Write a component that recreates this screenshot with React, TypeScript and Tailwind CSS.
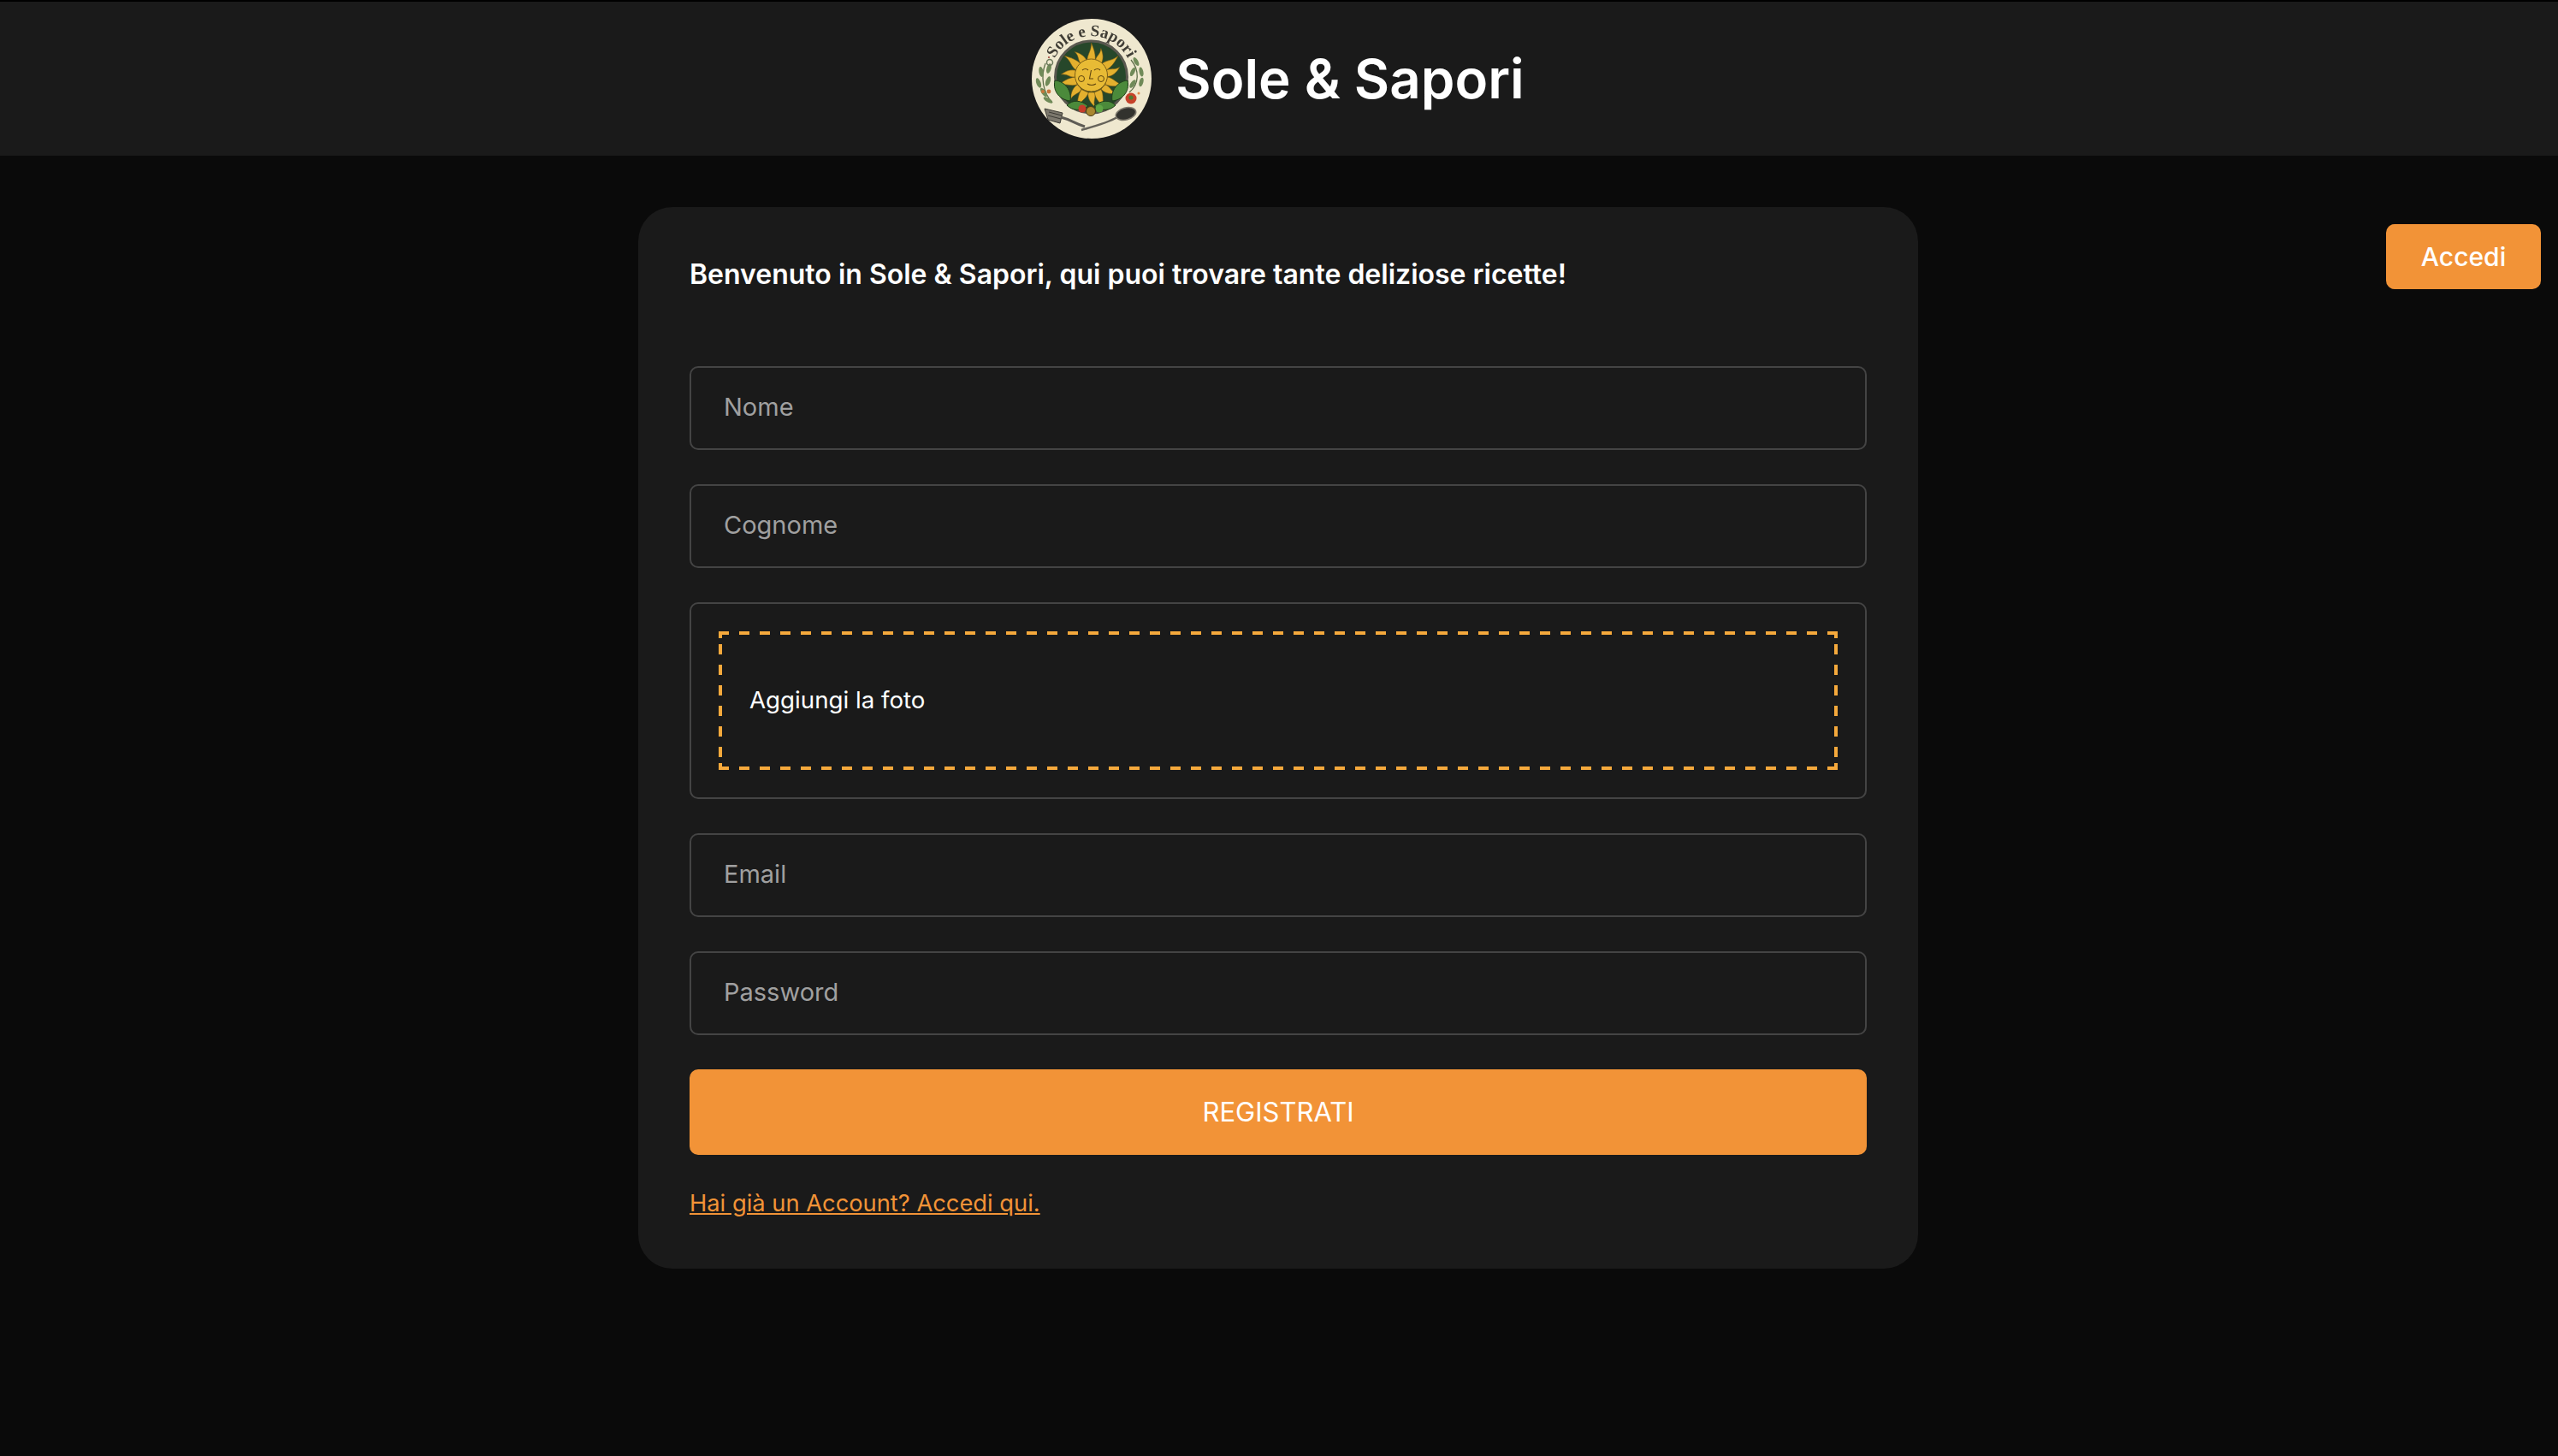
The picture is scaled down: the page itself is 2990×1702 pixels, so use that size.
import React from 'react'

const FONT = 'font-["Inter","Liberation_Sans",sans-serif]'

const rays = [0, 26, 52, 78, 104, 130, 156, 180, 204, 230, 256, 282, 308, 334]

const Logo = () => (
  <svg viewBox="0 0 140 140" className="h-[140px] w-[140px] shrink-0">
    <defs>
      <path id="arc" d="M 21.5 68 A 48 48 0 0 1 117.5 68" />
      <filter id="soft">
        <feGaussianBlur stdDeviation="0.4" />
      </filter>
    </defs>
    <g filter="url(#soft)">
      <circle cx="70" cy="70" r="70" fill="#efe8cf" />
      <circle cx="69.5" cy="68" r="42" fill="#27472a" stroke="#5a5850" strokeWidth="3" />
      {/* sun rays */}
      {rays.map((a, i) => (
        <path
          key={a}
          d={
            i % 2 === 0
              ? 'M 65 50 C 64 42 70 38 69.5 28 C 73 36 75 42 74 50 Z'
              : 'M 66 50 C 63 44 68 40 65 33 C 71 38 74 44 73 50 Z'
          }
          fill="#e3b02f"
          stroke="#6e5212"
          strokeWidth="0.5"
          transform={`rotate(${a} 69.5 68)`}
        />
      ))}
      {/* leaves inside the ring */}
      <path d="M 27 72 C 39 73 47 84 45 96 C 34 95 24 86 27 72 Z" fill="#4c8a3a" stroke="#1f3d1a" />
      <path d="M 112 72 C 100 73 92 84 94 96 C 105 95 115 86 112 72 Z" fill="#4c8a3a" stroke="#1f3d1a" />
      <path d="M 41 101 C 48 94 58 95 66 102 C 58 108 48 108 41 101 Z" fill="#4c8a3a" stroke="#1f3d1a" />
      <path d="M 73 102 C 81 95 91 94 98 101 C 91 108 81 108 73 102 Z" fill="#4c8a3a" stroke="#1f3d1a" />
      <circle cx="59" cy="105" r="4.5" fill="#c43d2a" />
      <circle cx="79" cy="105" r="4.5" fill="#5fa544" />
      <circle cx="69" cy="108" r="5.5" fill="#a9862f" stroke="#4a3d17" />
      {/* sun face */}
      <circle cx="69.5" cy="66" r="19" fill="#e8bb36" stroke="#7d5f16" strokeWidth="1" />
      <path d="M 59 60 q 4 -3 7 0 M 73 60 q 4 -3 7 0" fill="none" stroke="#5f4510" strokeWidth="1.2" />
      <path d="M 69.5 60 L 67.5 70 L 72 70 M 65 76 q 5 3 10 0" fill="none" stroke="#5f4510" strokeWidth="1.1" />
      <circle cx="58" cy="70" r="3.5" fill="none" stroke="#5f4510" strokeWidth="1" />
      <circle cx="81" cy="70" r="3.5" fill="none" stroke="#5f4510" strokeWidth="1" />
      {/* laurel left */}
      <path d="M 16 52 C 10 68 13 86 24 98" fill="none" stroke="#5e6d4a" strokeWidth="1.3" />
      {[[11, 62, -10], [8, 75, -20], [14, 86, -35], [20, 58, 15], [19, 73, 20]].map(([x, y, r]) => (
        <ellipse key={`l${x}${y}`} cx={x} cy={y} rx="2.6" ry="6" fill="#6f8a58" transform={`rotate(${r} ${x} ${y})`} />
      ))}
      <ellipse cx="19" cy="95" rx="6" ry="2.4" fill="#6f8a58" transform="rotate(30 19 95)" />
      <circle cx="21" cy="51" r="3.5" fill="none" stroke="#6d7a5c" strokeWidth="1.5" />
      {/* laurel right */}
      <path d="M 116 48 C 126 60 126 76 114 86" fill="none" stroke="#5e6d4a" strokeWidth="1.3" />
      {[[122, 50, -30], [128, 62, -12], [128, 74, 15], [118, 62, 25], [118, 76, 35]].map(([x, y, r]) => (
        <ellipse key={`r${x}${y}`} cx={x} cy={y} rx="2.4" ry="5.5" fill="#6f8a58" transform={`rotate(${r} ${x} ${y})`} />
      ))}
      <circle cx="116" cy="93" r="6.5" fill="#c6432a" />
      <circle cx="116" cy="92" r="2.6" fill="#4d7a32" />
      <circle cx="125" cy="87" r="1.5" fill="#e08a4a" />
      <circle cx="20" cy="85" r="2.4" fill="#c8743a" />
      <circle cx="13" cy="85" r="2" fill="#c8743a" />
      <circle cx="20" cy="45" r="1.1" fill="#a0453a" />
      {/* fork and spoon */}
      <path d="M 15 105 L 36 110 L 33 122 L 19 118 Z" fill="#7c786d" stroke="#3c3a34" />
      <path d="M 20 109 L 35 113 M 19 113 L 34 117" stroke="#3c3a34" strokeWidth="1" />
      <path d="M 34 115 C 46 118 50 122 62 126" fill="none" stroke="#5f5c54" strokeWidth="3" />
      <path d="M 58 130 C 72 126 88 122 100 115" fill="none" stroke="#66635a" strokeWidth="2.6" />
      <ellipse cx="110" cy="111" rx="12" ry="7" fill="#33322d" stroke="#7c786d" strokeWidth="1.5" transform="rotate(-15 110 111)" />
      <text className="font-['Liberation_Serif',serif]" fontSize="19" fontWeight="700" fill="#3f3d36">
        <textPath href="#arc" startOffset="50%" textAnchor="middle">
          Sole e Sapori
        </textPath>
      </text>
    </g>
  </svg>
)

const Field = ({ placeholder, type = 'text' }: { placeholder: string; type?: string }) => (
  <input
    type={type}
    placeholder={placeholder}
    className="h-[98px] w-full rounded-[10px] border-2 border-[#444444] bg-[#1a1a1a] px-[38px] pb-[3px] text-[29px] text-white outline-none placeholder:text-[#a0a0a0]"
  />
)

const App = () => {
  return (
    <div className={`relative min-h-[1702px] bg-[#0a0a0a] ${FONT}`}>
      <header className="flex h-[182px] items-center justify-center gap-[28px] border-t-2 border-[#000000] bg-[#1a1a1a] pr-[2px]">
        <Logo />
        <h1 className="pb-[1px] text-[63.6px] font-semibold text-white">Sole &amp; Sapori</h1>
      </header>

      <button className="absolute right-[20px] top-[262px] h-[76px] w-[181px] rounded-[10px] bg-[#f29337] text-[30px] font-medium text-white">
        Accedi
      </button>

      <main className="flex justify-center pr-[2px] pt-[60px]">
        <div className="flex w-[1496px] flex-col rounded-[40px] bg-[#1a1a1a] p-[60px]">
          <h2 className="mb-[88px] text-[32px] font-semibold leading-[38px] text-white">
            Benvenuto in Sole &amp; Sapori, qui puoi trovare tante deliziose ricette!
          </h2>

          <form className="flex flex-col gap-[40px]">
            <Field placeholder="Nome" />
            <Field placeholder="Cognome" />

            <div className="h-[230px] rounded-[10px] border-2 border-[#444444] p-[32px]">
              <div className="relative flex h-full items-center pl-[36px]">
                {/* dashes drawn so the corners line up with the reference */}
                <svg className="absolute inset-0 h-[162px] w-[1308px]" fill="none" stroke="#f5a93c" strokeWidth="4">
                  <line x1="0" y1="2" x2="1308" y2="2" strokeDasharray="12 12" />
                  <line x1="0" y1="160" x2="1308" y2="160" strokeDasharray="12 12" />
                  <line x1="2" y1="0" x2="2" y2="162" strokeDasharray="8 7 12 12 12 12 12 12 12 12 12 12 12 7 8" />
                  <line x1="1306" y1="0" x2="1306" y2="162" strokeDasharray="8 7 12 12 12 12 12 12 12 12 12 12 12 7 8" />
                </svg>
                <span className="text-[27.7px] text-white">Aggiungi la foto</span>
              </div>
            </div>

            <Field placeholder="Email" />
            <Field placeholder="Password" type="password" />

            <button
              type="button"
              className="h-[100px] w-full rounded-[10px] bg-[#f29337] text-[31px] text-white"
            >
              REGISTRATI
            </button>
          </form>

          <a href="#" className="mt-[40px] text-[27.3px] leading-[33px] text-[#f29337] underline">
            Hai già un Account? Accedi qui.
          </a>
        </div>
      </main>
    </div>
  )
}

export default App
